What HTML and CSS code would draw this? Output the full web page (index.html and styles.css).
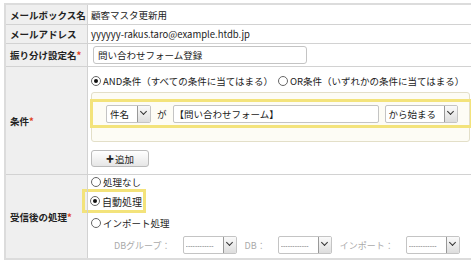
FILE: index.html
```html
<!DOCTYPE html>
<html>
  <head>
    <title>振り分け設定</title>
    <link rel="stylesheet" href="styles.css">
  </head>

  <body>
    <table class="form-table">
      <tr class="row-1">
        <th>メールボックス名</th>
        <td>顧客マスタ更新用</td>
      </tr>
      <tr class="row-2">
        <th>メールアドレス</th>
        <td>yyyyyy-rakus.taro@example.htdb.jp</td>
      </tr>
      <tr class="row-3">
        <th>振り分け設定名<span class="req">*</span></th>
        <td><input type="text" class="name-input" value="問い合わせフォーム登録"></td>
      </tr>
      <tr>
        <th>条件<span class="req">*</span></th>
        <td>
          <div class="mode-line">
            <label class="radio"><span class="dot on"></span>AND条件（すべての条件に当てはまる）</label>
            <label class="radio"><span class="dot"></span>OR条件（いずれかの条件に当てはまる）</label>
          </div>
          <div class="cond-box">
            <div class="cond-row highlight">
              <span class="select w-field">件名<span class="arrow"></span></span>
              <span class="ga">が</span>
              <span class="text-box">【問い合わせフォーム】</span>
              <span class="select w-op">から始まる<span class="arrow"></span></span>
            </div>
          </div>
          <button class="add-btn"><span class="plus">✚</span>追加</button>
        </td>
      </tr>
      <tr>
        <th>受信後の処理<span class="req">*</span></th>
        <td>
          <div class="options">
            <label class="radio first"><span class="dot"></span>処理なし</label>
            <label class="radio boxed"><span class="dot on"></span>自動処理</label>
            <label class="radio"><span class="dot"></span>インポート処理</label>
          </div>
          <div class="import-line">
            <span class="muted">DBグループ：</span>
            <span class="select small"><span class="dash">------------</span><span class="arrow"></span></span>
            <span class="muted">DB：</span>
            <span class="select small"><span class="dash">------------</span><span class="arrow"></span></span>
            <span class="muted">インポート：</span>
            <span class="select small"><span class="dash">------------</span><span class="arrow"></span></span>
          </div>
        </td>
      </tr>
    </table>
  </body>
</html>
```

FILE: styles.css
```css
body {
  margin: 3px 4px;
  font-family: "Noto Sans CJK JP", "Noto Sans", sans-serif;
  font-size: 9.5px;
  color: #222;
  background: #fff;
  white-space: nowrap;
}

.form-table {
  width: 469px;
  border-collapse: collapse;
  border: 2px solid #dcdcdc;
}

.form-table th,
.form-table td {
  border: 1px solid #d2d2d2;
  padding: 0 0 0 3px;
  text-align: left;
  vertical-align: middle;
}

.form-table th {
  width: 77px;
  padding-left: 4px;
  background: #efefef;
  font-weight: bold;
}

.row-1 td { height: 19px; }
.row-2 td { height: 18px; }
.row-3 td { height: 22px; }

.req {
  color: #e0401c;
}

.name-input {
  display: block;
  box-sizing: border-box;
  width: 214px;
  height: 18px;
  margin: 0 0 0 2px;
  padding: 0 4px;
  border: 1px solid #c4c4c4;
  border-radius: 3px;
  font: inherit;
  color: #222;
}

.mode-line {
  display: flex;
  gap: 5px;
  margin: 4px 0 2px 0;
}

.radio {
  display: flex;
  align-items: center;
  gap: 2px;
  height: 19px;
}

.dot {
  box-sizing: border-box;
  flex: none;
  width: 10px;
  height: 10px;
  border: 1px solid #666;
  border-radius: 50%;
  background: #fff;
  position: relative;
}

.dot.on::after {
  content: "";
  position: absolute;
  left: 2px;
  top: 2px;
  width: 4px;
  height: 4px;
  border-radius: 50%;
  background: #111;
}

.cond-box {
  width: 377px;
  padding: 6px 0 13px 0;
  background: #fdfcf5;
  border: 1px solid #e3dfc8;
  border-radius: 3px;
}

.cond-row {
  display: flex;
  align-items: center;
  height: 23px;
  padding-left: 13px;
}

.highlight {
  margin: 0 -4px 0 -2px;
  border: 3px solid #f3e37b;
}

.select {
  box-sizing: border-box;
  display: flex;
  align-items: center;
  height: 18px;
  padding-left: 3px;
  border: 1px solid #c4c4c4;
  border-radius: 2px;
  background: #fff;
  overflow: hidden;
}

.w-field {
  width: 45px;
}

.w-op {
  width: 73px;
}

.arrow {
  box-sizing: border-box;
  flex: none;
  margin-left: auto;
  width: 13px;
  height: 16px;
  border-left: 1px solid #999;
  background: linear-gradient(#fafafa, #ddd);
  position: relative;
}

.arrow::after {
  content: "";
  position: absolute;
  left: 3px;
  top: 3px;
  width: 4px;
  height: 4px;
  border-right: 1.5px solid #333;
  border-bottom: 1.5px solid #333;
  transform: rotate(45deg);
}

.ga {
  margin: 0 6px 0 6px;
}

.text-box {
  box-sizing: border-box;
  display: flex;
  align-items: center;
  width: 206px;
  height: 18px;
  margin-right: 6px;
  padding-left: 1px;
  border: 1px solid #c4c4c4;
  border-radius: 2px;
  background: #fff;
}

.add-btn {
  display: flex;
  align-items: center;
  justify-content: center;
  gap: 1px;
  width: 58px;
  height: 17px;
  margin: 8px 0 7px 0;
  padding: 0;
  border: 1px solid #bbb;
  border-radius: 3px;
  background: linear-gradient(#fff, #e6e6e6);
  font: inherit;
  color: #222;
}

.plus {
  font-size: 8px;
}

.options .first {
  height: 14px;
}

.boxed {
  box-sizing: border-box;
  width: 64px;
  height: 24px;
  margin-left: -9px;
  padding-left: 5px;
  border: 3px solid #f3e37b;
  font-size: 10px;
}

.import-line {
  display: flex;
  align-items: center;
  height: 26px;
  margin-left: 23px;
}

.muted {
  color: #aaa;
  font-size: 9px;
  margin-right: 12px;
}

.select.small {
  width: 54px;
  margin-right: 8px;
  padding-left: 2px;
}

.dash {
  color: #777;
  font-family: "Liberation Sans", sans-serif;
  font-size: 7px;
  overflow: hidden;
}
```
